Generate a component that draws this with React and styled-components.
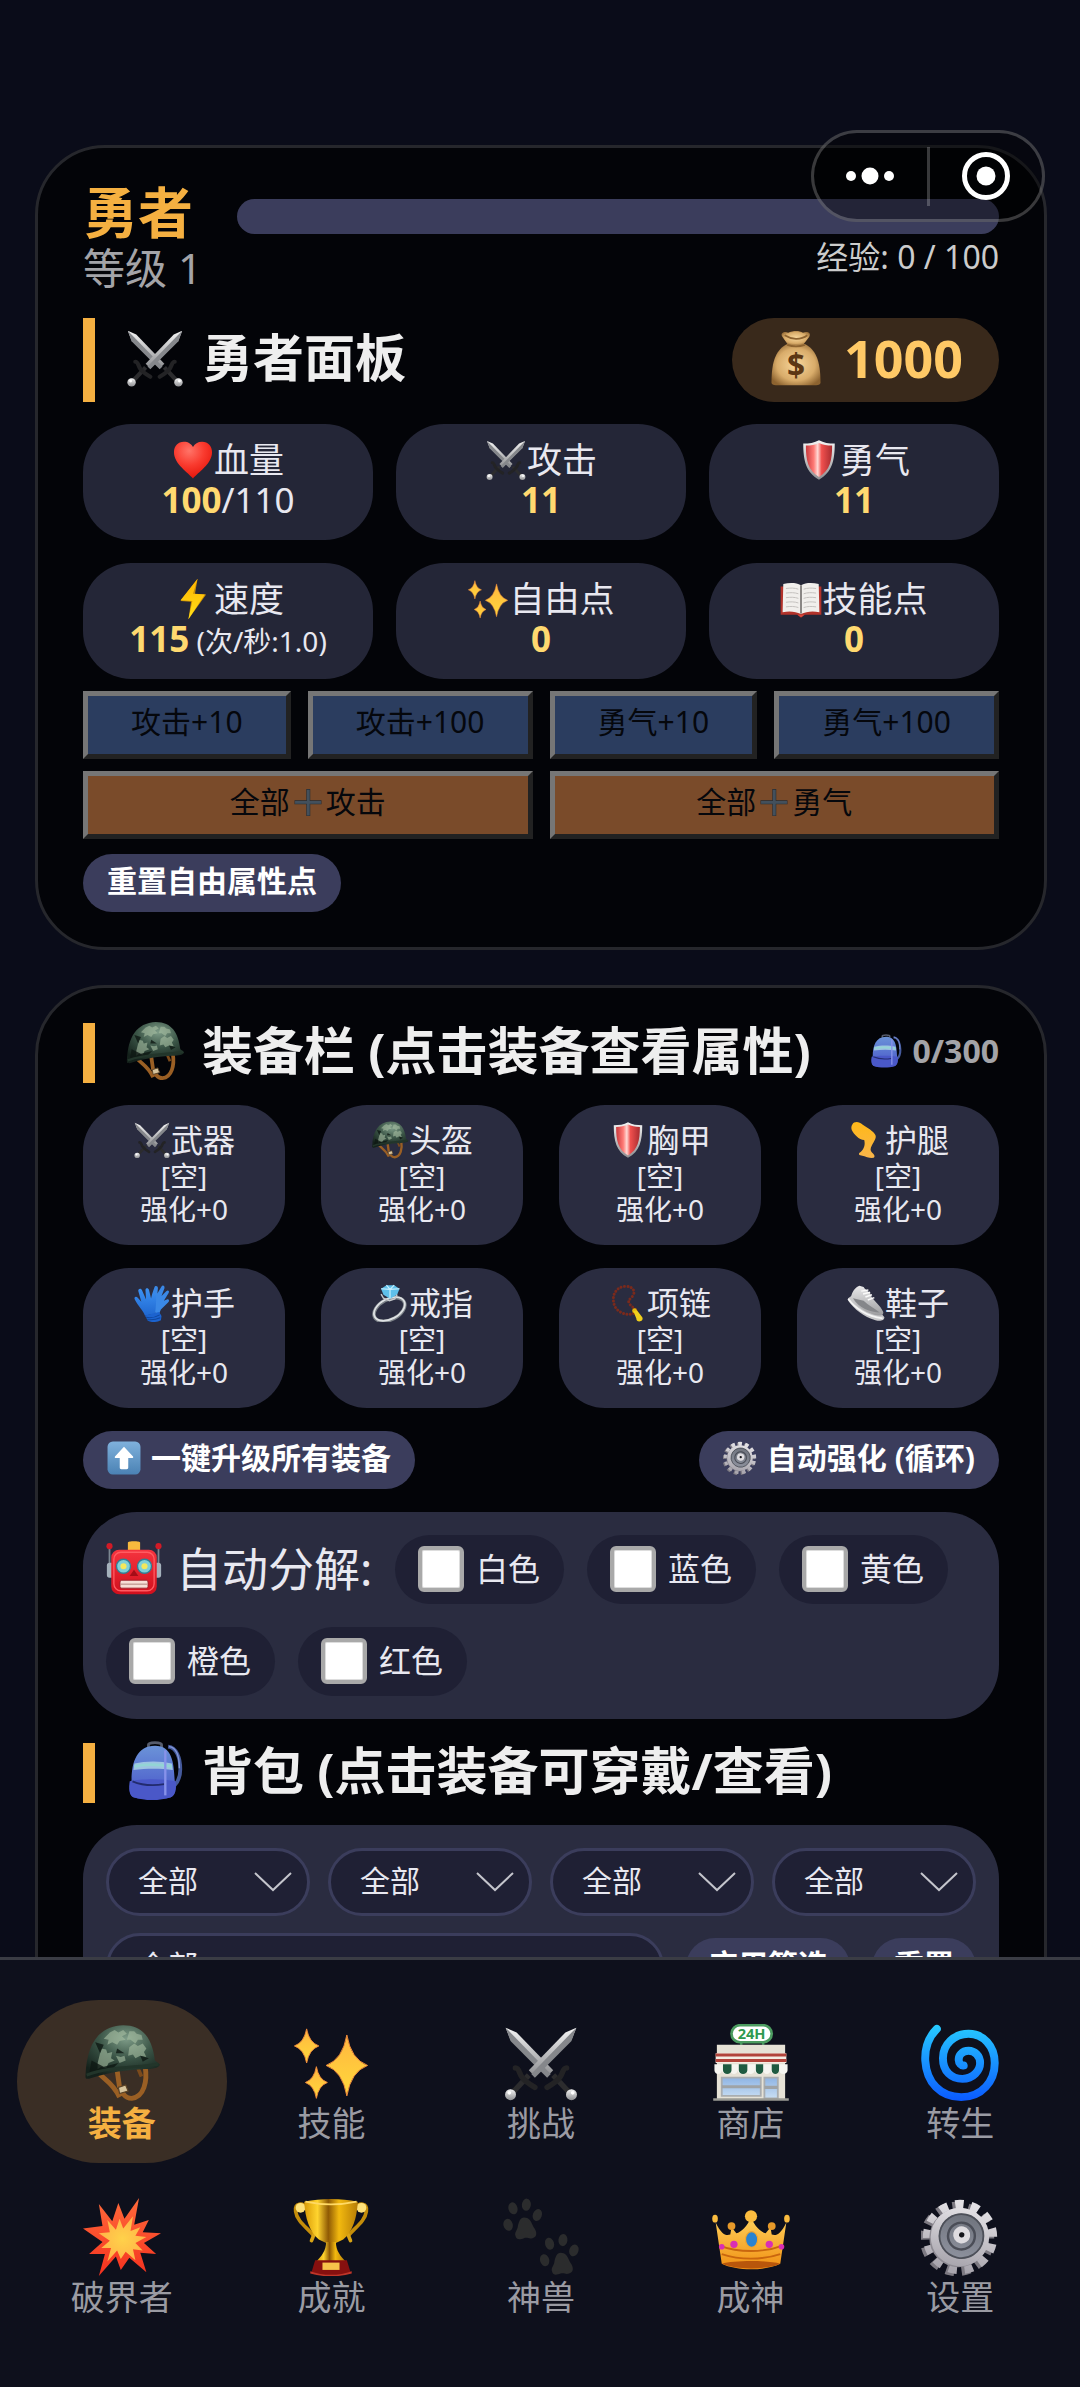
import styled, { createGlobalStyle, ThemeProvider } from "styled-components";

const theme = {
  color: {
    page: "#0a0c19",
    card: "#030408",
    cardBorder: "#26272c",
    accent: "#f5b041",
    gold: "#ffc966",
    value: "#ffd970",
    text: "#e8e8f0",
    title: "#eeeeee",
    muted: "#a4a4a8",
    stat: "#242637",
    slot: "#2a2c40",
    field: "#1f2034",
    pill: "#3b3d5c",
  },
  font: `"Noto Sans", "Noto Sans CJK SC", sans-serif`,
};

const GlobalStyle = createGlobalStyle`
  * {
    box-sizing: border-box;
  }

  body {
    margin: 0;
    background-color: ${theme.color.page};
    color: ${theme.color.text};
    font-family: ${theme.font};
  }

  button, select, input {
    font-family: inherit;
    margin: 0;
  }
`;

const StyledApp = styled.div`
  position: relative;
  display: flex;
  flex-direction: column;
  height: 100vh;
  overflow: hidden;
`;

const StyledContent = styled.main`
  flex: 1;
  min-height: 0;
  overflow-y: auto;
  scrollbar-width: none;
  padding: 145px 33px 35px 35px;
  display: flex;
  flex-direction: column;
  gap: 35px;
`;

const StyledCard = styled.section`
  ${({ theme }) => `
    flex: none;
    background-color: ${theme.color.card};
    border: 3px solid ${theme.color.cardBorder};
    border-radius: 70px;
    padding: 35px 45px;
  `}
`;

const StyledHeader = styled.header`
  display: flex;
  align-items: center;
  gap: 35px;
  margin-bottom: 23px;
`;

const StyledName = styled.h1`
  margin: 0;
  font-size: 55px;
  line-height: 58px;
  font-weight: bold;
  color: ${({ theme }) => theme.color.accent};
`;

const StyledLevel = styled.div`
  font-size: 42px;
  line-height: 54px;
  color: ${({ theme }) => theme.color.muted};
`;

const StyledExp = styled.div`
  flex: 1;
`;

const StyledExpTrack = styled.div`
  height: 35px;
  border-radius: 18px;
  overflow: hidden;
  background-color: ${({ theme }) => theme.color.pill};
`;

const StyledExpFill = styled.div`
  height: 100%;
  background-color: ${({ theme }) => theme.color.accent};
`;

const StyledExpText = styled.div`
  font-size: 32px;
  line-height: 45px;
  text-align: right;
  color: #cccccc;
`;

const StyledTitleRow = styled.div`
  ${({ theme }) => `
    display: flex;
    align-items: center;
    justify-content: space-between;
    min-height: 60px;
    border-left: 12px solid ${theme.color.accent};
    padding-left: 30px;
    margin-bottom: 22px;
  `}
`;

const StyledTitle = styled.h2`
  display: flex;
  align-items: center;
  gap: 17px;
  height: 60px;
  margin: 0;
  padding-bottom: 5px;
  font-size: 51px;
  line-height: 55px;
  font-weight: bold;
  color: ${({ theme }) => theme.color.title};
`;

const StyledGold = styled.div`
  display: flex;
  align-items: center;
  gap: 20px;
  height: 84px;
  padding: 0 36px 5px;
  border-radius: 42px;
  background-color: #39291b;
  color: ${({ theme }) => theme.color.gold};
  font-size: 52px;
  font-weight: bold;
`;

const StyledCapacity = styled.div`
  display: flex;
  align-items: center;
  gap: 10px;
  padding-bottom: 5px;
  font-size: 32px;
  line-height: 40px;
  font-weight: bold;
  color: ${({ theme }) => theme.color.muted};
`;

const StyledIcon = styled.svg`
  display: block;
  flex: none;
  width: ${({ $size }) => $size}px;
  height: ${({ $size }) => $size}px;
`;

const StyledStats = styled.div`
  display: grid;
  grid-template-columns: repeat(3, 1fr);
  gap: 23px;
  margin-bottom: 12px;
`;

const StyledStat = styled.div`
  padding: 16px 0 20px;
  border-radius: 48px;
  background-color: ${({ theme }) => theme.color.stat};
  text-align: center;
  font-size: 35px;
  line-height: 40px;
`;

const StyledLabel = styled.div`
  display: flex;
  align-items: center;
  justify-content: center;
  height: 40px;
`;

const StyledValue = styled.strong`
  color: ${({ theme }) => theme.color.value};
`;

const StyledSmall = styled.span`
  font-size: 28px;
  line-height: 1;
`;

const StyledPoints = styled.div`
  display: flex;
  flex-direction: column;
  gap: 12px;
  margin-bottom: 15px;
`;

const StyledPointRow = styled.div`
  display: flex;
  gap: 17px;
`;

const StyledPointButton = styled.button`
  display: flex;
  align-items: center;
  justify-content: center;
  flex: 1 1 ${({ $equal }) => ($equal ? "0" : "auto")};
  height: 68px;
  padding: 0 0 6px;
  border: 5px solid;
  border-color: #767676 #222222 #222222 #767676;
  border-radius: 0;
  background-color: ${({ $tone }) => ($tone === "orange" ? "#7a4b2a" : "#2b3d5f")};
  color: #05070c;
  font-size: 30px;
  line-height: 40px;
`;

const StyledPill = styled.button`
  display: flex;
  align-items: center;
  gap: 10px;
  height: 58px;
  padding: 0 ${({ $compact }) => ($compact ? 22 : 24)}px 4px;
  border: none;
  border-radius: 29px;
  background-color: ${({ theme }) => theme.color.pill};
  color: #ffffff;
  font-size: 30px;
  line-height: 40px;
  font-weight: bold;
  white-space: nowrap;
`;

const StyledSlots = styled.div`
  display: grid;
  grid-template-columns: repeat(4, 1fr);
  gap: 23px 36px;
  margin-bottom: 23px;
`;

const StyledSlot = styled.button`
  padding: 15px 0 19px;
  border: none;
  border-radius: 46px;
  background-color: ${({ theme }) => theme.color.slot};
  color: ${({ theme }) => theme.color.text};
  font-size: 28px;
  line-height: 33px;
`;

const StyledSlotName = styled(StyledLabel)`
  font-size: 32px;
  line-height: 40px;
`;

const StyledActions = styled.div`
  display: flex;
  justify-content: space-between;
  margin-bottom: 23px;
`;

const StyledPanel = styled.div`
  padding: 23px;
  border-radius: 54px;
  background-color: ${({ theme }) => theme.color.slot};
`;

const StyledDecompose = styled(StyledPanel)`
  display: flex;
  flex-wrap: wrap;
  gap: 23px;
  margin-bottom: 24px;
`;

const StyledDecomposeLabel = styled.div`
  display: flex;
  align-items: center;
  gap: 14px;
  width: 266px;
  padding-bottom: 4px;
  font-size: 46px;
  line-height: 62px;
  white-space: nowrap;
`;

const StyledChip = styled.label`
  display: flex;
  align-items: center;
  gap: 12px;
  height: 69px;
  padding: 0 24px 2px 23px;
  border-radius: 35px;
  background-color: ${({ theme }) => theme.color.field};
  font-size: 32px;
  line-height: 60px;
`;

const StyledCheckbox = styled.input`
  appearance: none;
  width: 46px;
  height: 46px;
  border: 4px solid #a9a9a9;
  border-radius: 6px;
  background-color: #ffffff;
  box-shadow: inset 0 0 0 1px #dddddd;

  &:checked {
    background-color: ${({ theme }) => theme.color.accent};
  }
`;

const StyledFilters = styled(StyledPanel)`
  display: flex;
  flex-direction: column;
  gap: 17px;
`;

const StyledFilterRow = styled.div`
  display: flex;
  align-items: center;
  gap: ${({ $gap }) => $gap}px;
`;

const StyledSelectWrapper = styled.div`
  position: relative;
  flex: 1;
`;

const StyledSelect = styled.select`
  ${({ theme }) => `
    appearance: none;
    display: block;
    width: 100%;
    height: 68px;
    padding: 0 60px 4px 29px;
    border: 3px solid ${theme.color.pill};
    border-radius: 34px;
    background-color: ${theme.color.field};
    color: ${theme.color.text};
    font-size: 30px;
  `}
`;

const StyledChevron = styled.svg`
  position: absolute;
  top: 24px;
  right: 18px;
  width: 38px;
  height: 20px;
  pointer-events: none;
`;

const StyledNav = styled.nav`
  flex: none;
  display: grid;
  grid-template-columns: repeat(5, 1fr);
  row-gap: 11px;
  padding: 40px 15px 50px 17px;
  border-top: 3px solid #3a3c44;
  background-color: #0e101c;
`;

const StyledNavItem = styled.a`
  display: flex;
  flex-direction: column;
  align-items: center;
  height: 163px;
  padding-top: 24px;
  border-radius: 82px;
  background-color: ${({ $active }) => ($active ? "#3a2e25" : "transparent")};
  color: ${({ $active, theme }) => ($active ? theme.color.accent : "#9a9ba3")};
  font-size: 34px;
  line-height: 42px;
  font-weight: ${({ $active }) => ($active ? "bold" : "normal")};
  text-decoration: none;
`;

const StyledCapsule = styled.div`
  position: absolute;
  top: 130px;
  right: 35px;
  display: flex;
  align-items: center;
  width: 234px;
  height: 92px;
  border: 3px solid rgba(255, 255, 255, 0.22);
  border-radius: 46px;
  background-color: rgba(0, 0, 0, 0.4);
`;

const StyledCapsuleButton = styled.button`
  display: flex;
  align-items: center;
  justify-content: center;
  flex: 1;
  height: 59px;
  padding: 0;
  border: none;
  background: none;

  & + & {
    border-left: 3px solid rgba(255, 255, 255, 0.22);
  }
`;

const HiddenDefs = styled.svg`
  position: absolute;
  width: 0;
  height: 0;
`;

const Gradient = ({ id, from, to }) => (
  <linearGradient id={id} x1="0" y1="0" x2="0" y2="1">
    <stop offset="0" stopColor={from} />
    <stop offset="1" stopColor={to} />
  </linearGradient>
);

const IconDefs = () => (
  <HiddenDefs aria-hidden="true">
    <defs>
      <Gradient id="steel" from="#f4f4f4" to="#8e8f92" />
      <Gradient id="bolt" from="#ffb300" to="#ffe11a" />
      <Gradient id="star" from="#ffb640" to="#ffd93b" />
      <Gradient id="skin" from="#ffb818" to="#f9b54a" />
      <Gradient id="glove" from="#3c92f4" to="#2068d0" />
      <Gradient id="arrow" from="#7fb1dc" to="#4b82b4" />
      <Gradient id="robot" from="#f5343f" to="#d00f1c" />
      <Gradient id="pack" from="#6b93d8" to="#4753c9" />
      <Gradient id="glass" from="#8eb4e4" to="#c9def2" />
      <Gradient id="boom" from="#ff6a3a" to="#f5311f" />
      <Gradient id="crown" from="#ffd05a" to="#f08f12" />
      <Gradient id="gearFace" from="#e2e0e4" to="#a9a6ae" />
      <Gradient id="gearCore" from="#6f737d" to="#8d919d" />
      <Gradient id="shoe" from="#e9e9ea" to="#9c9c9f" />
      <linearGradient id="swirl" gradientUnits="userSpaceOnUse" x1="0" y1="0" x2="0" y2="64">
        <stop offset="0" stopColor="#27ccff" />
        <stop offset="1" stopColor="#0a58ff" />
      </linearGradient>
      <linearGradient id="cup" x1="0" y1="0" x2="1" y2="0">
        <stop offset="0" stopColor="#d99a06" />
        <stop offset="0.25" stopColor="#ffd42e" />
        <stop offset="0.45" stopColor="#8f5a04" />
        <stop offset="0.65" stopColor="#f2b90f" />
        <stop offset="1" stopColor="#b77d06" />
      </linearGradient>
      <linearGradient id="shieldRed" x1="0" y1="0" x2="1" y2="0">
        <stop offset="0" stopColor="#c9383c" />
        <stop offset="0.3" stopColor="#ff7b76" />
        <stop offset="0.45" stopColor="#ffd9d5" />
        <stop offset="0.6" stopColor="#f0504e" />
        <stop offset="1" stopColor="#a92c30" />
      </linearGradient>
      <radialGradient id="heart" cx="0.4" cy="0.25" r="0.8">
        <stop offset="0" stopColor="#ff7468" />
        <stop offset="0.5" stopColor="#f93a2e" />
        <stop offset="1" stopColor="#e31208" />
      </radialGradient>
      <radialGradient id="bag" cx="0.5" cy="0.5" r="0.6">
        <stop offset="0" stopColor="#f8d79c" />
        <stop offset="0.65" stopColor="#d9ac6a" />
        <stop offset="1" stopColor="#8d6330" />
      </radialGradient>
      <radialGradient id="helmet" cx="0.55" cy="0.25" r="0.75">
        <stop offset="0" stopColor="#7e9c88" />
        <stop offset="0.5" stopColor="#3a5446" />
        <stop offset="1" stopColor="#14211b" />
      </radialGradient>
      <radialGradient id="boomCore">
        <stop offset="0" stopColor="#ffd24a" />
        <stop offset="1" stopColor="#ffb548" />
      </radialGradient>
    </defs>
  </HiddenDefs>
);

const Sword = () => (
  <>
    <path d="M61 3 52 7 22 38l5 5 30-30z" fill="url(#steel)" />
    <path d="M61 3 24 41l3 3 30-30z" fill="#85878b" />
    <path d="M22 42 9 56" stroke="#2c2c2e" strokeWidth="4.500" />
    <path d="M11 36c3 0 3 4 5 7s6 6 11 9" fill="none" stroke="#232325" strokeWidth="4.500" strokeLinecap="round" />
    <circle cx="7" cy="58" r="4.5" fill="url(#steel)" />
    <circle cx="6" cy="56.500" r="1.500" fill="#fff" />
  </>
);

const Star = ({ x, y, w, h }) => (
  <path
    d={`M${x} ${y - h}Q${x + w * 0.2} ${y - h * 0.2} ${x + w} ${y}Q${x + w * 0.2} ${y + h * 0.2} ${x} ${y + h}Q${x - w * 0.2} ${y + h * 0.2} ${x - w} ${y}Q${x - w * 0.2} ${y - h * 0.2} ${x} ${y - h}z`}
    fill="url(#star)"
    stroke="#f08a3c"
    strokeWidth="0.800"
  />
);

const Paw = ({ x, y }) => (
  <g transform={`translate(${x} ${y})`} fill="#2b2c2d">
    <ellipse cx="4" cy="21" rx="3.800" ry="5" transform="rotate(-15 4 21)" />
    <ellipse cx="8" cy="7.500" rx="3.700" ry="5" transform="rotate(-15 8 7.500)" />
    <ellipse cx="19" cy="4.500" rx="3.700" ry="5" transform="rotate(5 19 4.500)" />
    <ellipse cx="28" cy="13" rx="3.700" ry="5" transform="rotate(20 28 13)" />
    <path d="M17 15c5 0 6 4 8 8 3 4 3 8-1 9-3 1-4-1-7 0s-6 2-7-2c-1-3 2-5 2-8 1-4 2-7 5-7z" />
  </g>
);

const ICONS = {
  swords: (
    <>
      <g transform="translate(64 0) scale(-1 1)">
        <Sword />
      </g>
      <Sword />
    </>
  ),
  heart: (
    <path
      d="M32 60C25 51 3 38 3 20 3 11 9 4 18 4c7 0 11 3 14 8 3-5 7-8 14-8 9 0 15 7 15 16 0 18-22 31-29 40z"
      fill="url(#heart)"
    />
  ),
  shield: (
    <>
      <path d="M8 7c9 0 17-1 24-5 7 4 15 5 24 5 0 26-4 44-24 55C12 51 8 33 8 7z" fill="url(#steel)" />
      <path d="M12 10c8 0 14-1 20-4 6 3 12 4 20 4 0 22-3 38-20 48-17-10-20-26-20-48z" fill="url(#shieldRed)" />
    </>
  ),
  bolt: (
    <>
      <path d="M39 1 13 35l16 1-4 27 27-38-17-1z" fill="#c98e06" />
      <path d="M39 1 13 34l18 1-6 28 25-38-18-1z" fill="url(#bolt)" />
    </>
  ),
  sparkles: (
    <>
      <Star x={45} y={34} w={17} h={25} />
      <Star x={12} y={18} w={10} h={14} />
      <Star x={20} y={48} w={9} h={13} />
    </>
  ),
  book: (
    <>
      <path d="M1 13h62v43H38l-6 4-6-4H1z" fill="#b3332b" />
      <path d="M5 9c10-2 20-2 27 2 7-4 17-4 27-2l1 43c-11-2-20-1-28 3-8-4-17-5-28-3z" fill="#f1efec" />
      <path d="M32 11v43" stroke="#55504e" strokeWidth="2" />
      <path
        d="M9 16c7-1 13-1 19 1M9 23c7-1 13-1 19 1M9 30c7-1 13-1 19 1M9 37c7-1 13-1 19 1M9 44c7-1 13-1 19 1M36 17c6-2 12-2 19-1M36 24c6-2 12-2 19-1M36 31c6-2 12-2 19-1M36 38c6-2 12-2 19-1M36 45c6-2 12-2 19-1"
        fill="none"
        stroke="#c4c1be"
        strokeWidth="1.500"
      />
      <path d="M27 56h10l-5 4z" fill="#d8483d" />
    </>
  ),
  plus: (
    <>
      <path d="M29 9h7v20h20v7H36v21h-7V36H8v-7h21z" fill="#262c33" />
      <path d="M30 10h5v20h20v5H35v21h-5V35H9v-5h21z" fill="#43505c" />
    </>
  ),
  bag: (
    <>
      <path d="M23 17 16 7c-2-4 3-6 7-4 5-2 12-3 17 0 5-2 10 0 7 5l-7 9z" fill="url(#bag)" />
      <path d="M19 6c8 5 18 6 26 0" fill="none" stroke="#8d6330" strokeWidth="2" />
      <path d="M22 16h20c12 6 18 18 18 44 0 2-2 3-5 3H9c-3 0-5-1-5-3 0-26 6-38 18-44z" fill="url(#bag)" />
      <path d="M22 17c6 2 14 2 20 0" fill="none" stroke="#8d6330" strokeWidth="2" />
      <text x="32" y="54" textAnchor="middle" fontSize="36" fontWeight="bold" fill="#5c3714">
        $
      </text>
    </>
  ),
  helmet: (
    <>
      <path d="M12 39c4 6 12 8 18 21M28 38l2 14M51 35c2 12-1 25-11 26-6 0-9-6-9-9" fill="none" stroke="#9a5f24" strokeWidth="4" />
      <path d="M45 36l3 7" stroke="#7b4a1b" strokeWidth="3" />
      <path d="M29 52l6-2 2 5-7 2z" fill="#d6c39c" stroke="#5c4326" />
      <path d="M2 43C3 17 12 2 33 1c17 0 24 12 26 29l4 3c0 3-6 4-12 4-16 1-27 2-46 8-2 0-3 0-3-2z" fill="url(#helmet)" />
      <path
        d="M22 7l4-2 3 2 4-2 3 3-4 2 3 3-5 1-2 3-4-2-4 2 1-4-4-1zM38 6l4 0 2 2 4 1 1 4-4 0-2 3-4-3-3 0zM38 19l4-3 3 2 4-2 3 4-2 3 2 4-5-1-4 2-2-3-4 1zM15 20l4 1 1 3 4-1-1 5 3 2-5 2-2 4-4-1-3 2 0-5zM27 26l4 1 3-1 1 4-5 2z"
        fill="#a9bfa4"
        opacity="0.600"
      />
      <path d="M10 15l7 2-3 7zM28 20l6 4-7 0zM7 30l10 5 12-3-5 5-19 4zM47 26l7 2-5 3z" fill="#0e1813" opacity="0.800" />
      <path d="M3 42c18-7 39-6 59-9" fill="none" stroke="#22352a" strokeWidth="2.500" />
    </>
  ),
  leg: (
    <path
      d="M9 6c3-6 12-5 17 0 8 6 19 11 22 18 2 5-3 11-6 17-3 6-3 9 0 12 4 4 6 6 3 9-7 1-12-2-21-4-5-1-5-4-1-6 6-5 8-12 6-20-9-1-17-9-21-17-1-3-1-6 1-9z"
      fill="url(#skin)"
    />
  ),
  gloves: (
    <>
      <path d="M32 44C28 32 30 22 36 6c1-4 6-3 6 1l-1 9 7-12c2-3 6-1 5 3l-5 13 8-8c3-3 6 0 4 3l-8 13 5-2c4-1 5 3 2 5L47 43l-4 9z" fill="#3a88e6" />
      <path d="M20 53C17 44 9 38 3 26c-2-4 2-6 5-3l6 7L9 12c-1-4 4-6 6-2l7 16-1-16c0-4 5-4 6 0l4 17 2-9c1-4 6-3 6 1 0 10 0 20-2 31z" fill="url(#glove)" />
      <path d="M20 53l24-6 4 7-1 7c-8 4-16 4-22 1z" fill="#1c63cf" />
      <path d="M22 56c8 2 16 0 23-4M24 60c8 1 15 0 22-3" fill="none" stroke="#0f479e" strokeWidth="1.800" />
    </>
  ),
  ring: (
    <>
      <ellipse cx="31" cy="43" rx="28" ry="17" transform="rotate(-28 31 43)" fill="none" stroke="#7c8288" strokeWidth="6" />
      <ellipse cx="31" cy="42" rx="28" ry="17" transform="rotate(-28 31 42)" fill="none" stroke="#dfe2e4" strokeWidth="3" />
      <path d="M17 8l9-6h13l9 6-4 10-12 7-11-7z" fill="#5fc0ea" />
      <path d="M26 2l6 7 7-7M17 8l15 1 16-1M32 9v15" fill="none" stroke="#c8f0ff" strokeWidth="2" />
      <path d="M17 17l4 7 10 4 9-3 4-7" fill="none" stroke="#c5c8cb" strokeWidth="2.500" />
    </>
  ),
  beads: (
    <>
      <path
        d="M46 46C38 55 18 52 10 38 3 22 10 6 26 4c15-1 19 9 14 16-4 6-10 7-5 14 3 5 8 6 11 11"
        fill="none"
        stroke="#7a2a1c"
        strokeWidth="5"
        strokeDasharray="0.100 5.600"
        strokeLinecap="round"
      />
      <circle cx="43" cy="45" r="4" fill="#e8b90c" />
      <path d="M41 46l6-2 9 12c2 4-1 7-5 7-3 0-5-2-5-5z" fill="#f0d01c" />
    </>
  ),
  shoe: (
    <>
      <path d="M2 24l8-6 10 10L58 50l5 6c0 6-8 7-15 5C28 55 12 42 2 28z" fill="#c9c9cb" />
      <path d="M7 21c2-8 6-15 14-18l7 2c4 7 12 8 12 14 5 10 17 18 21 28 1 5-4 7-9 6C35 50 15 40 7 21z" fill="url(#shoe)" />
      <path d="M10 24l18 4c8 8 18 12 27 20-15 0-36-8-45-24z" fill="#85868a" />
      <path d="M24 12l12-2M27 17l12-3M31 22l11-4M35 27l11-4" stroke="#fafafa" strokeWidth="2.500" />
      <path d="M2 25c10 14 30 30 58 33" fill="none" stroke="#f5f5f5" strokeWidth="3" />
    </>
  ),
  up: (
    <>
      <rect x="1" y="1" width="62" height="62" rx="10" fill="url(#arrow)" />
      <path d="M32 11 49 29c1 2 0 3-2 3h-7v18c0 2-1 3-3 3H27c-2 0-3-1-3-3V32h-7c-2 0-3-1-2-3z" fill="#fff" />
    </>
  ),
  gear: (
    <g transform="rotate(12 32 32)">
      <circle cx="30" cy="34" r="26.500" fill="none" stroke="#7d7a82" strokeWidth="8" strokeDasharray="6.700 6.110" />
      <circle cx="32" cy="32" r="26.500" fill="none" stroke="url(#gearFace)" strokeWidth="8" strokeDasharray="6.700 6.110" />
      <circle cx="31" cy="33" r="24" fill="#8e8b93" />
      <circle cx="32" cy="32" r="24" fill="url(#gearFace)" />
      <circle cx="33" cy="31" r="18.500" fill="url(#gearCore)" />
      <circle cx="33" cy="31" r="18" fill="none" stroke="#4d5059" strokeWidth="1.500" />
      <circle cx="33" cy="31" r="11" fill="none" stroke="#4a4d57" strokeWidth="2" />
      <circle cx="33" cy="30" r="7" fill="#dedce0" />
      <circle cx="33" cy="30" r="2.200" fill="#14151a" />
    </g>
  ),
  robot: (
    <>
      <path d="M4 8v26M60 8v26" stroke="#7b8791" strokeWidth="2" />
      <rect x="1" y="26" width="8" height="17" rx="3" fill="#a4b1bb" />
      <rect x="55" y="26" width="8" height="17" rx="3" fill="#a4b1bb" />
      <circle cx="4" cy="7" r="3.500" fill="#d11a26" />
      <circle cx="60" cy="7" r="3.500" fill="#d11a26" />
      <path d="M25 12V3c0-2 14-2 14 0v9z" fill="#f7ba3e" />
      <rect x="6" y="11" width="52" height="51" rx="9" fill="url(#robot)" />
      <rect x="9" y="14" width="46" height="44" rx="8" fill="none" stroke="#ff5b61" strokeWidth="1.500" />
      <circle cx="20" cy="30" r="8" fill="#7fd0d8" stroke="#2f7f95" strokeWidth="1.500" />
      <circle cx="44" cy="30" r="8" fill="#7fd0d8" stroke="#2f7f95" strokeWidth="1.500" />
      <circle cx="20" cy="30" r="3.500" fill="#f4e85c" />
      <circle cx="44" cy="30" r="3.500" fill="#f4e85c" />
      <path d="M32 34l5 7H27z" fill="#a40d17" />
      <rect x="16" y="46" width="32" height="9" rx="2" fill="#f6ded6" stroke="#96202a" />
      <path d="M17 50.500h30" stroke="#c09a92" strokeWidth="1.500" />
    </>
  ),
  backpack: (
    <>
      <path d="M25 7V4c0-3 14-3 14 0v3" fill="none" stroke="#565c6c" strokeWidth="3" />
      <path d="M46 6c9 1 13 12 13 24 0 8-2 13-6 17" fill="none" stroke="#455a9c" strokeWidth="4" />
      <path d="M47 6c9 1 11 12 11 23" fill="none" stroke="#8397d8" strokeWidth="1.500" />
      <path d="M9 60C4 58 4 46 7 42 7 22 13 5 32 5c18 0 20 17 21 37 2 5 1 16-4 18-12 4-28 4-40 0z" fill="url(#pack)" />
      <path d="M10 24c12-3 28-3 40 0l1 7c-13-2-28-2-42 0z" fill="#a9d0e4" opacity="0.850" />
      <path d="M10 27c13-3 26-2 40 0" fill="none" stroke="#8fdbd0" strokeWidth="3" opacity="0.700" />
      <path d="M5 43c12-3 36-3 49 0 1 8 0 15-5 17-12 3-28 3-40 0-5-2-5-10-4-17z" fill="#4a58c8" />
      <path d="M8 43c12 5 22 5 34 3" fill="none" stroke="#222b6e" strokeWidth="2" />
      <path d="M43 10v48" stroke="#8792ea" strokeWidth="2.500" />
    </>
  ),
  shop: (
    <>
      <path d="M24 13v4M42 13v4" stroke="#3f9e5c" strokeWidth="2" />
      <rect x="16" y="1" width="33" height="14" rx="7" fill="#fff" stroke="#4c9c60" strokeWidth="2.200" />
      <text x="32.500" y="12.500" textAnchor="middle" fontSize="12" fontWeight="bold" fill="#2f9a50">
        24H
      </text>
      <path d="M4 17h56v45H4z" fill="#e6e2d6" />
      <path d="M3 24h58v8H3z" fill="#f4ece2" />
      <path d="M3 25.500h58M3 30h58" stroke="#b2433a" strokeWidth="2.500" />
      <path d="M2 33h60v5c0 4-7 4-7 0 0 4-7 4-7 0 0 4-6 4-6 0 0 4-7 4-7 0 0 4-7 4-7 0 0 4-7 4-7 0 0 4-6 4-6 0 0 4-7 4-7 0 0 4-6 4-6 0z" fill="#f5f5f0" />
      <path d="M9 33h7v5c0 4-7 4-7 0zM22 33h7v5c0 4-7 4-7 0zM36 33h6v5c0 4-6 4-6 0zM49 33h6v5c0 4-6 4-6 0z" fill="#1e5a40" />
      <path d="M8 44h32v15H8zM43 44h11v17H43z" fill="url(#glass)" stroke="#a9adb0" strokeWidth="1.500" />
      <path d="M8 51.500h32M43 52h11" stroke="#9fa3a6" strokeWidth="2.500" />
      <path d="M1 62h62" stroke="#9b9b95" strokeWidth="2" />
    </>
  ),
  swirl: (
    <path
      d="M13 4C6 11 3 19 3.500 30 4.500 48 16 60 33 60c17 0 27.500-13 27.500-28C60.500 18 51 8 39 8S18 17 18 28s7 17 16 17 14.500-7 14.500-13-4.500-10-9.500-10c-5.500 0-8.500 4-8 8 0 2 2 4.500 4 4"
      fill="none"
      stroke="url(#swirl)"
      strokeWidth="6.500"
      strokeLinecap="round"
    />
  ),
  boom: (
    <>
      <path
        d="M46 0l-4 22 12-4-5 10 15 1-14 8 10 9-13-1 5 16-14-12-7 10-4-11-14 16 5-18H5l11-10L0 25l16-2-3-18 11 14 5-15 5 13z"
        fill="url(#boom)"
      />
      <path
        d="M41 15l-2 12 8-3-4 7 9 1-9 5 6 6-8-1 2 9-8-7-4 6-3-7-8 9 3-11h-8l7-6-9-6 9-1-2-10 7 8 3-9 3 8z"
        fill="url(#boomCore)"
      />
    </>
  ),
  cup: (
    <>
      <path d="M12 9C9 3 2 4 3 11c1 8 9 13 15 20M52 9c3-6 10-5 9 2-1 8-9 13-15 20" fill="none" stroke="#c48d0a" strokeWidth="3" />
      <circle cx="7" cy="8" r="4" fill="#ffe27a" />
      <circle cx="57" cy="8" r="4" fill="#ffe27a" />
      <path d="M18 30l-2 5M46 30l2 5" stroke="#d9a416" strokeWidth="3" strokeLinecap="round" />
      <path d="M10 3c14-3 30-3 44 0-1 14-4 24-12 31l-6 3h-8l-6-3C14 27 11 17 10 3z" fill="url(#cup)" />
      <path d="M11 3c14 3 28 3 42 0" fill="none" stroke="#ffd964" strokeWidth="1.500" />
      <path d="M28 36h8c0 7 4 12 8 16H20c4-4 8-9 8-16z" fill="url(#cup)" />
      <path d="M19 51h26l3 10c-8 4-24 4-32 0z" fill="#86100f" />
      <path d="M15 60c10 4 24 4 34 0v2c-10 3-24 3-34 0z" fill="#c03529" />
      <rect x="25" y="53" width="14" height="6" fill="#f6c34a" />
    </>
  ),
  paws: (
    <>
      <Paw x={1} y={1} />
      <Paw x={31} y={30} />
    </>
  ),
  crown: (
    <>
      <path d="M8 54 3 20c5 10 8 11 12 10l1-6 4 5c4-1 9-6 12-13 3 7 8 12 12 13l4-5 1 6c4 1 7 0 12-10l-5 34c-12 6-36 6-48 0z" fill="url(#crown)" />
      <circle cx="32" cy="15" r="5" fill="#fbbc3f" />
      <circle cx="16" cy="23" r="3.200" fill="#e79a2a" />
      <circle cx="49" cy="23" r="3.200" fill="#e79a2a" />
      <ellipse cx="2.500" cy="17" rx="2.300" ry="3.200" fill="#fbbc3f" />
      <ellipse cx="61.500" cy="17" rx="2.300" ry="3.200" fill="#fbbc3f" />
      <path d="M6 39c16 6 36 6 52 0M8 46c15 5 33 5 48 0" fill="none" stroke="#c9660e" strokeWidth="1.500" />
      <path d="M8 54c10-3 38-3 48 0-12 5-36 5-48 0z" fill="#b8560b" />
      <ellipse cx="32.500" cy="34" rx="5" ry="6.500" fill="#2a83cf" stroke="#f6a62a" />
      <circle cx="18" cy="38" r="3" fill="#d92fb4" />
      <circle cx="47" cy="38" r="3" fill="#d92fb4" />
      <circle cx="8" cy="40" r="2.300" fill="#d92fb4" />
      <circle cx="57" cy="40" r="2.300" fill="#d92fb4" />
    </>
  ),
};

const Icon = ({ name, size }) => (
  <StyledIcon viewBox="0 0 64 64" $size={size} aria-hidden="true">
    {ICONS[name]}
  </StyledIcon>
);

const stats = [
  { icon: "heart", label: "血量", value: 100, rest: "/110" },
  { icon: "swords", label: "攻击", value: 11 },
  { icon: "shield", label: "勇气", value: 11 },
  { icon: "bolt", label: "速度", value: 115, note: "(次/秒:1.0)" },
  { icon: "sparkles", label: "自由点", value: 0 },
  { icon: "book", label: "技能点", value: 0 },
];

const slots = [
  { icon: "swords", label: "武器" },
  { icon: "helmet", label: "头盔" },
  { icon: "shield", label: "胸甲" },
  { icon: "leg", label: "护腿" },
  { icon: "gloves", label: "护手" },
  { icon: "ring", label: "戒指" },
  { icon: "beads", label: "项链" },
  { icon: "shoe", label: "鞋子" },
];

const points = ["攻击+10", "攻击+100", "勇气+10", "勇气+100"];

const colors = ["白色", "蓝色", "黄色", "橙色", "红色"];

const filters = ["部位", "品质", "等级", "强化"];

const navItems = [
  { icon: "helmet", label: "装备", active: true },
  { icon: "sparkles", label: "技能" },
  { icon: "swords", label: "挑战" },
  { icon: "shop", label: "商店" },
  { icon: "swirl", label: "转生" },
  { icon: "boom", label: "破界者" },
  { icon: "cup", label: "成就" },
  { icon: "paws", label: "神兽" },
  { icon: "crown", label: "成神" },
  { icon: "gear", label: "设置" },
];

const FilterSelect = ({ label }) => (
  <StyledSelectWrapper>
    <StyledSelect aria-label={label}>
      <option>全部</option>
    </StyledSelect>
    <StyledChevron viewBox="0 0 38 20" aria-hidden="true">
      <path d="M1 1l18 17L37 1" fill="none" stroke="#c4c5cc" strokeWidth="2" />
    </StyledChevron>
  </StyledSelectWrapper>
);

const HeroCard = ({ exp, maxExp }) => (
  <StyledCard>
    <StyledHeader>
      <div>
        <StyledName>勇者</StyledName>
        <StyledLevel>等级 1</StyledLevel>
      </div>
      <StyledExp>
        <StyledExpTrack>
          <StyledExpFill style={{ width: `${(exp / maxExp) * 100}%` }} />
        </StyledExpTrack>
        <StyledExpText>
          经验: {exp} / {maxExp}
        </StyledExpText>
      </StyledExp>
    </StyledHeader>
    <StyledTitleRow>
      <StyledTitle>
        <Icon name="swords" size={60} />
        勇者面板
      </StyledTitle>
      <StyledGold>
        <Icon name="bag" size={56} />
        1000
      </StyledGold>
    </StyledTitleRow>
    <StyledStats>
      {stats.map(({ icon, label, value, rest, note }) => (
        <StyledStat key={label}>
          <StyledLabel>
            <Icon name={icon} size={42} />
            {label}
          </StyledLabel>
          <StyledValue>{value}</StyledValue>
          {rest}
          {note && <StyledSmall> {note}</StyledSmall>}
        </StyledStat>
      ))}
    </StyledStats>
    <StyledPoints>
      <StyledPointRow>
        {points.map((point) => (
          <StyledPointButton key={point}>{point}</StyledPointButton>
        ))}
      </StyledPointRow>
      <StyledPointRow>
        {["攻击", "勇气"].map((name) => (
          <StyledPointButton key={name} $tone="orange" $equal>
            全部
            <Icon name="plus" size={36} />
            {name}
          </StyledPointButton>
        ))}
      </StyledPointRow>
    </StyledPoints>
    <StyledPill>重置自由属性点</StyledPill>
  </StyledCard>
);

const EquipmentCard = () => (
  <StyledCard>
    <StyledTitleRow>
      <StyledTitle>
        <Icon name="helmet" size={60} />
        装备栏 (点击装备查看属性)
      </StyledTitle>
      <StyledCapacity>
        <Icon name="backpack" size={34} />
        0/300
      </StyledCapacity>
    </StyledTitleRow>
    <StyledSlots>
      {slots.map(({ icon, label }) => (
        <StyledSlot key={label}>
          <StyledSlotName>
            <Icon name={icon} size={38} />
            {label}
          </StyledSlotName>
          <div>[空]</div>
          <div>强化+0</div>
        </StyledSlot>
      ))}
    </StyledSlots>
    <StyledActions>
      <StyledPill>
        <Icon name="up" size={34} />
        一键升级所有装备
      </StyledPill>
      <StyledPill>
        <Icon name="gear" size={34} />
        自动强化 (循环)
      </StyledPill>
    </StyledActions>
    <StyledDecompose>
      <StyledDecomposeLabel>
        <Icon name="robot" size={56} />
        自动分解:
      </StyledDecomposeLabel>
      {colors.map((color) => (
        <StyledChip key={color}>
          <StyledCheckbox type="checkbox" />
          {color}
        </StyledChip>
      ))}
    </StyledDecompose>
    <StyledTitleRow>
      <StyledTitle>
        <Icon name="backpack" size={60} />
        背包 (点击装备可穿戴/查看)
      </StyledTitle>
    </StyledTitleRow>
    <StyledFilters>
      <StyledFilterRow $gap={18}>
        {filters.map((label) => (
          <FilterSelect key={label} label={label} />
        ))}
      </StyledFilterRow>
      <StyledFilterRow $gap={22}>
        <FilterSelect label="套装" />
        <StyledPill $compact>应用筛选</StyledPill>
        <StyledPill $compact>重置</StyledPill>
      </StyledFilterRow>
    </StyledFilters>
  </StyledCard>
);

const Capsule = () => (
  <StyledCapsule>
    <StyledCapsuleButton aria-label="更多">
      <svg width="52" height="20" viewBox="0 0 52 20" fill="#fff">
        <circle cx="7" cy="10" r="5" />
        <circle cx="26" cy="10" r="8.500" />
        <circle cx="45" cy="10" r="5" />
      </svg>
    </StyledCapsuleButton>
    <StyledCapsuleButton aria-label="关闭">
      <svg width="50" height="50" viewBox="0 0 50 50">
        <circle cx="25" cy="25" r="21.500" fill="none" stroke="#fff" strokeWidth="5" />
        <circle cx="25" cy="25" r="9.500" fill="#fff" />
      </svg>
    </StyledCapsuleButton>
  </StyledCapsule>
);

const App = () => (
  <ThemeProvider theme={theme}>
    <GlobalStyle />
    <IconDefs />
    <StyledApp>
      <StyledContent>
        <HeroCard exp={0} maxExp={100} />
        <EquipmentCard />
      </StyledContent>
      <StyledNav>
        {navItems.map(({ icon, label, active }) => (
          <StyledNavItem key={label} href="#" $active={active}>
            <Icon name={icon} size={78} />
            {label}
          </StyledNavItem>
        ))}
      </StyledNav>
      <Capsule />
    </StyledApp>
  </ThemeProvider>
);

export default App;
